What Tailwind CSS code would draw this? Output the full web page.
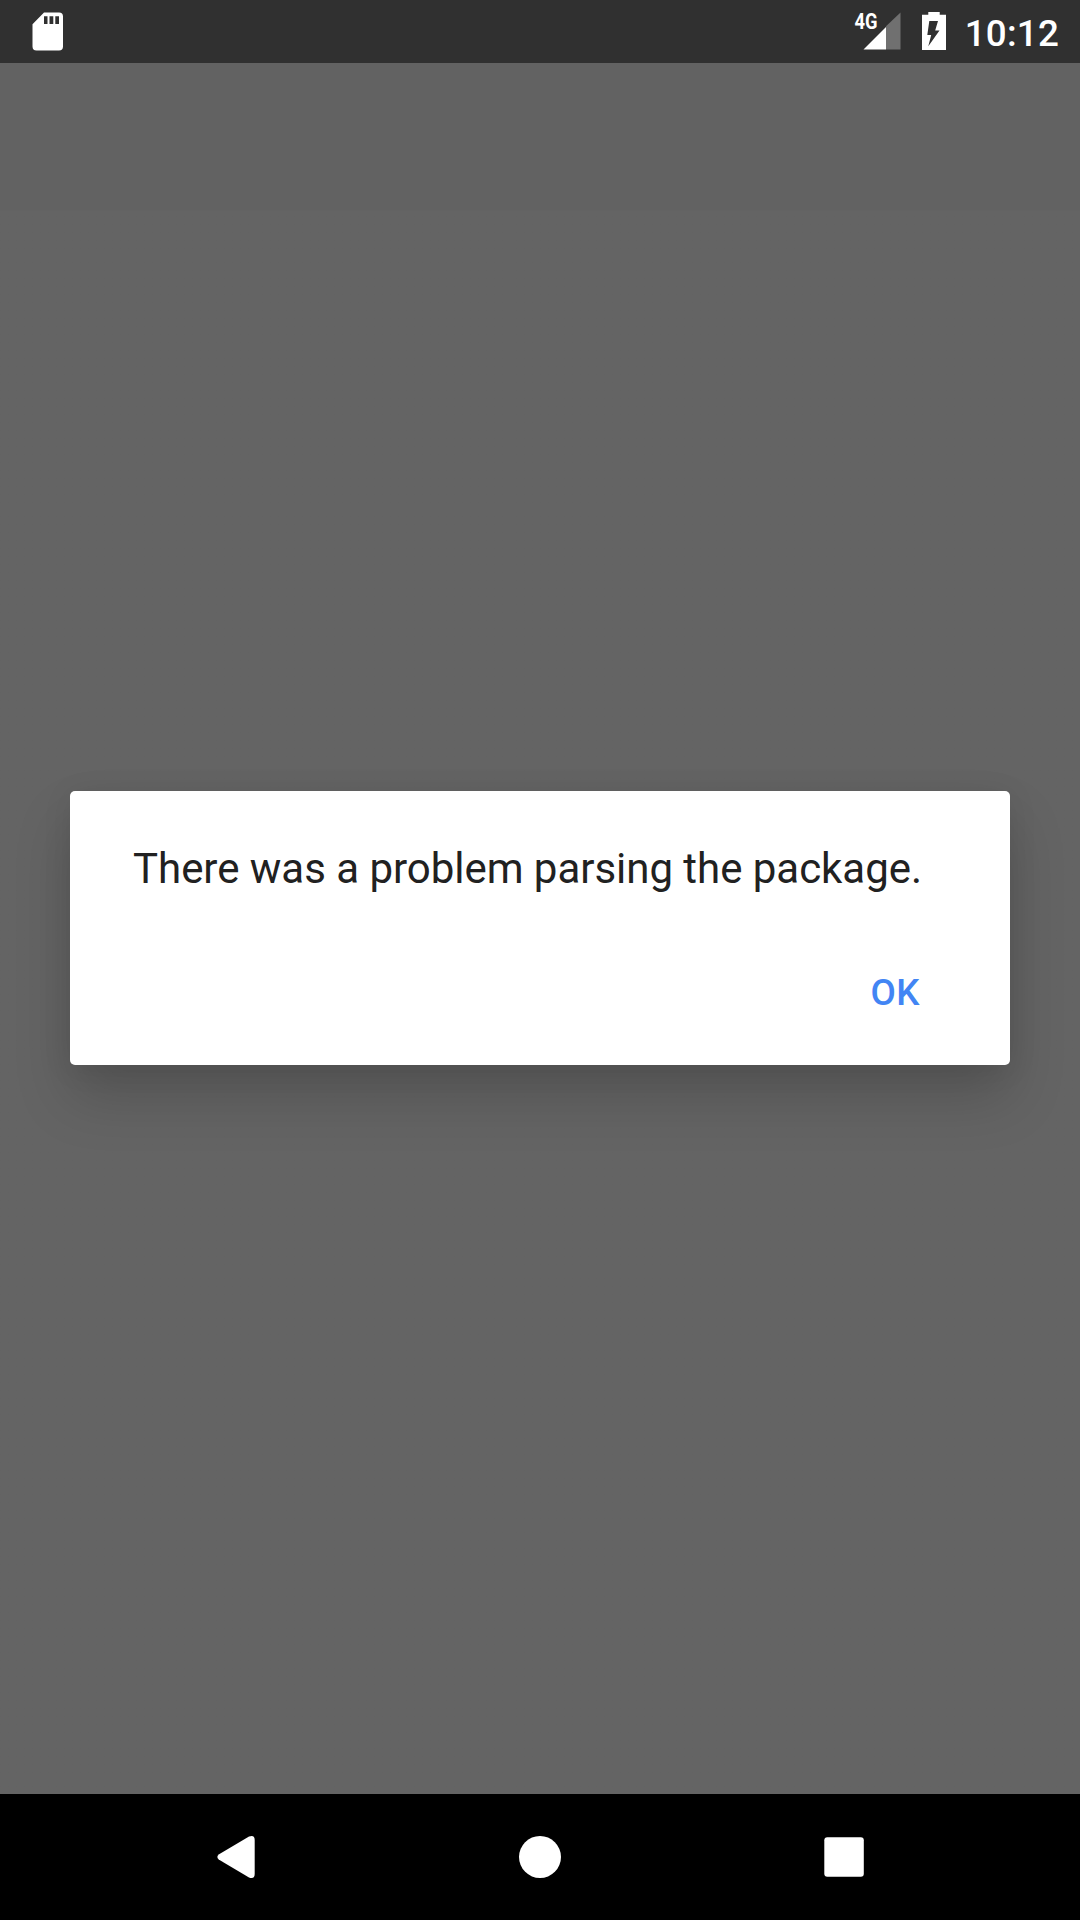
<!DOCTYPE html>
<html lang="en">
<head>
<meta charset="utf-8">
<title>Package installer</title>
<script src="https://cdn.jsdelivr.net/npm/@tailwindcss/browser@4"></script>
</head>
<body class="flex h-[1920px] w-[1080px] flex-col overflow-hidden bg-[#646464] font-['Roboto',sans-serif]">
  <header class="flex h-[63px] shrink-0 items-start justify-between bg-[#303030] pr-[21px] pl-8 text-white">
    <svg class="mt-3 h-[39px] w-[31px]" viewBox="0 0 31 39" fill="currentColor" aria-label="SD card">
      <path fill-rule="evenodd" d="M12 .5H27Q31 .5 31 4.500V34.500Q31 38.500 27 38.500H4.500Q.5 38.500 .5 34.500V12.200ZM12 4.300V12H15.500V4.300ZM17.500 4.300V12H21.300V4.300ZM23.300 4.300V12H27V4.300Z"/>
    </svg>
    <div class="flex items-start">
      <svg class="h-[63px] w-[113px]" viewBox="0 0 113 63" fill="currentColor">
        <text x="2.500" y="29" font-size="21.500" font-weight="700" textLength="23" lengthAdjust="spacingAndGlyphs">4G</text>
        <path fill="#707070" d="M34 26.300 48.500 12.500V49.500H34Z"/>
        <path d="M11.500 49.500 34 27V49.500Z"/>
        <path fill-rule="evenodd" d="M76.300 12H87.700V14.800H94V50H70V14.800H76.300ZM77.300 21 75.300 35H79.200L76.300 46.300 87.500 30.500H83.200L86 21Z"/>
      </svg>
      <time class="mt-3 text-[36.75px] leading-[43px] font-medium tracking-[0.2px]">10:12</time>
    </div>
  </header>
  <main class="flex flex-1 flex-col bg-linear-to-b from-[#626262] from-[147px] to-[#646464] to-[148px] px-[70px] pt-[728px]">
    <section role="alertdialog" class="flex h-[274px] flex-col rounded-[5px] bg-white px-[63px] pt-[53px] shadow-[0_32px_56px_rgba(0,0,0,0.17),0_4px_30px_rgba(0,0,0,0.08)]">
      <p class="text-[42px] leading-[49px] tracking-[-0.03px] whitespace-nowrap text-[#212121]">There was a problem parsing the package.</p>
      <button class="mt-[78px] mr-[27px] self-end text-[36.75px] leading-[43px] font-medium tracking-[0.5px] text-[#4285f4]">OK</button>
    </section>
  </main>
  <nav class="flex h-[126px] shrink-0 bg-black text-white">
    <svg class="h-full w-full" viewBox="0 0 1080 126" fill="currentColor">
      <path d="M218.700 60.600 249 42.500Q254.700 40.500 254.700 46V80Q254.700 85.500 249 83.500L218.700 65.500Q216 63 218.700 60.600Z"/>
      <circle cx="540" cy="63" r="21"/>
      <rect x="824.300" y="43.300" width="39.500" height="39.500" rx="3"/>
    </svg>
  </nav>
</body>
</html>
